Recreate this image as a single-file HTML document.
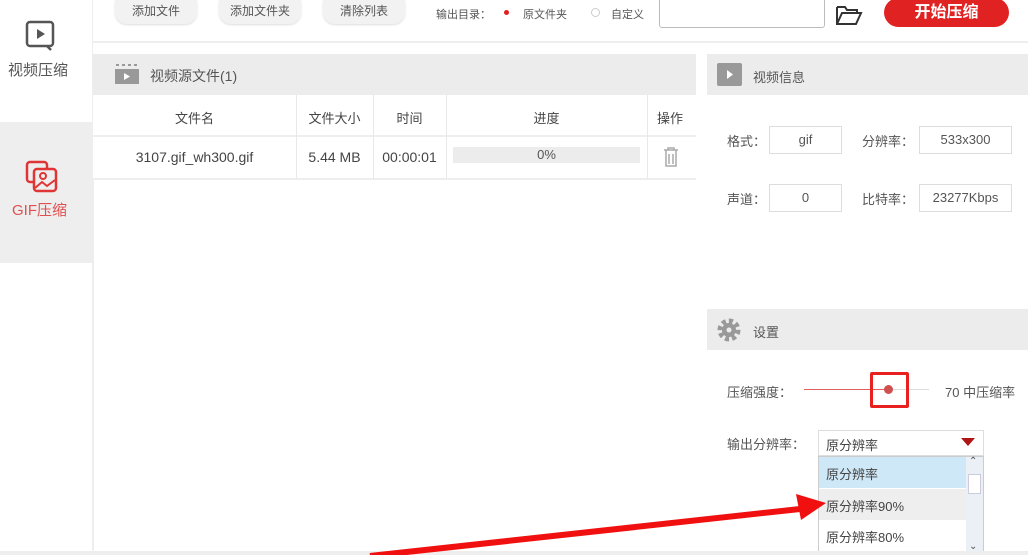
<!DOCTYPE html>
<html><head><meta charset="utf-8"><style>
*{margin:0;padding:0;box-sizing:border-box}
body{width:1028px;height:555px;overflow:hidden;background:#fff;font-family:"Liberation Sans","Noto Sans CJK SC",sans-serif;color:#444;position:relative;font-size:13px}
.a{position:absolute}
.btn{position:absolute;top:0;height:24px;border-radius:0 0 12px 12px;background:#f2f2f2;box-shadow:0 1px 2px #ddd;font-size:12px;color:#555;text-align:center;line-height:22px}
.hdr{position:absolute;background:#ececec;height:41px}
.cell{position:absolute;text-align:center;color:#444}
.vl{position:absolute;width:1px;background:#e8e8e8}
.hl{position:absolute;height:2px;background:#eee}
.inp{position:absolute;border:1px solid #ddd;height:28px;line-height:26px;text-align:center;font-size:13px;color:#555}
.lbl{position:absolute;font-size:13px;color:#555}
</style></head><body>
<div class="a" style="left:0;top:0;width:93px;height:555px;border-right:1px solid #eee"></div>
<svg class="a" style="left:25px;top:20px" width="32" height="32" viewBox="0 0 32 32"><rect x="2" y="2" width="26" height="24" rx="3" fill="none" stroke="#555" stroke-width="2.5"/><path d="M12 9 L20 14 L12 19Z" fill="#555"/><path d="M22 26 L26 30" stroke="#555" stroke-width="2.5"/></svg>
<div class="a" style="left:8px;top:59px;font-size:15px;color:#555">视频压缩</div>
<div class="a" style="left:0;top:122px;width:93px;height:141px;background:#eeeeee"></div>
<svg class="a" style="left:25px;top:160px" width="34" height="34" viewBox="0 0 34 34"><rect x="2" y="2" width="20" height="20" rx="3" fill="none" stroke="#e03535" stroke-width="2.5"/><rect x="9" y="9" width="22" height="22" rx="3" fill="#eee" stroke="#e03535" stroke-width="2.5"/><circle cx="18" cy="16" r="3" fill="none" stroke="#e03535" stroke-width="2"/><path d="M10 28 L17 22 L22 26 L30 20" fill="none" stroke="#e03535" stroke-width="2"/></svg>
<div class="a" style="left:12px;top:199px;font-size:15px;color:#e05050">GIF压缩</div>
<div class="btn" style="left:115px;width:82px">添加文件</div>
<div class="btn" style="left:219px;width:82px">添加文件夹</div>
<div class="btn" style="left:323px;width:82px">清除列表</div>
<div class="a" style="left:436px;top:6px;font-size:11px;color:#555">输出目录：</div>
<div class="a" style="left:504px;top:10px;width:5px;height:5px;border-radius:50%;background:#e02020"></div>
<div class="a" style="left:523px;top:6px;font-size:11px;color:#555">原文件夹</div>
<div class="a" style="left:591px;top:8px;width:9px;height:9px;border-radius:50%;border:1px solid #ccc"></div>
<div class="a" style="left:611px;top:6px;font-size:11px;color:#555">自定义</div>
<div class="a" style="left:659px;top:-2px;width:166px;height:30px;border:1px solid #bbb;border-radius:3px"></div>
<svg class="a" style="left:835px;top:4px" width="28" height="22" viewBox="0 0 28 22"><path d="M2 3 H10 L12 6 H22 V9" fill="none" stroke="#333" stroke-width="2"/><path d="M2 3 V20 H21 L26 9 H7 L2 20" fill="none" stroke="#333" stroke-width="2"/></svg>
<div class="a" style="left:884px;top:-2px;width:125px;height:29px;border-radius:15px;background:#e02222;color:#fff;font-size:16px;font-weight:bold;text-align:center;line-height:29px">开始压缩</div>
<div class="a" style="left:93px;top:41px;width:935px;height:2px;background:#eee"></div>
<div class="hdr" style="left:93px;top:54px;width:603px"></div>
<svg class="a" style="left:114px;top:63px" width="26" height="22" viewBox="0 0 26 22"><rect x="1" y="6" width="24" height="15" fill="#999"/><path d="M2 2 h3 M8 2 h3 M14 2 h3 M20 2 h3" stroke="#999" stroke-width="2"/><path d="M10 10 L16 13.5 L10 17Z" fill="#fff"/></svg>
<div class="a" style="left:150px;top:66px;font-size:14px;color:#555">视频源文件(1)</div>
<div class="hl" style="left:93px;top:135px;width:603px"></div>
<div class="hl" style="left:93px;top:178px;width:603px"></div>
<div class="vl" style="left:296px;top:95px;height:83px"></div>
<div class="vl" style="left:373px;top:95px;height:83px"></div>
<div class="vl" style="left:446px;top:95px;height:83px"></div>
<div class="vl" style="left:647px;top:95px;height:83px"></div>
<div class="cell" style="left:93px;top:108px;width:203px">文件名</div>
<div class="cell" style="left:296px;top:108px;width:77px">文件大小</div>
<div class="cell" style="left:373px;top:108px;width:73px">时间</div>
<div class="cell" style="left:446px;top:108px;width:201px">进度</div>
<div class="cell" style="left:647px;top:108px;width:49px;text-align:left;padding-left:10px">操作</div>
<div class="cell" style="left:93px;top:149px;width:203px;font-size:14px">3107.gif_wh300.gif</div>
<div class="cell" style="left:296px;top:149px;width:77px;font-size:14px">5.44 MB</div>
<div class="cell" style="left:373px;top:149px;width:73px;font-size:14px">00:00:01</div>
<div class="a" style="left:453px;top:147px;width:187px;height:16px;background:#ececec;text-align:center;font-size:13px;line-height:16px;color:#555">0%</div>
<svg class="a" style="left:662px;top:146px" width="18" height="22" viewBox="0 0 18 22"><path d="M2 4 H16 M6 4 V2 H12 V4 M4 4 V20 H14 V4 M7 8 V18 M11 8 V18" fill="none" stroke="#aaa" stroke-width="1.5"/></svg>
<div class="a" style="left:93px;top:178px;width:1px;height:372px;background:#eee"></div>
<div class="hdr" style="left:707px;top:54px;width:321px"></div>
<div class="a" style="left:717px;top:63px;width:25px;height:23px;background:#999;border-radius:2px"></div>
<svg class="a" style="left:717px;top:63px" width="25" height="23"><path d="M10 7 L16 11.5 L10 16Z" fill="#fff"/></svg>
<div class="a" style="left:753px;top:67px;font-size:13px;color:#555">视频信息</div>
<div class="lbl" style="left:727px;top:131px">格式：</div>
<div class="inp" style="left:769px;top:126px;width:73px">gif</div>
<div class="lbl" style="left:862px;top:131px">分辨率：</div>
<div class="inp" style="left:919px;top:126px;width:93px">533x300</div>
<div class="lbl" style="left:727px;top:189px">声道：</div>
<div class="inp" style="left:769px;top:184px;width:73px">0</div>
<div class="lbl" style="left:862px;top:189px">比特率：</div>
<div class="inp" style="left:919px;top:184px;width:93px">23277Kbps</div>
<div class="hdr" style="left:707px;top:309px;width:321px"></div>
<svg class="a" style="left:716px;top:317px" width="26" height="26" viewBox="0 0 26 26"><circle cx="13" cy="13" r="9" fill="none" stroke="#999" stroke-width="5" stroke-dasharray="4 3"/><circle cx="13" cy="13" r="7" fill="#999"/><circle cx="13" cy="13" r="2.5" fill="#ececec"/></svg>
<div class="a" style="left:753px;top:322px;font-size:13px;color:#555">设置</div>
<div class="lbl" style="left:727px;top:382px">压缩强度：</div>
<div class="a" style="left:804px;top:389px;width:85px;height:1px;background:#e06060"></div>
<div class="a" style="left:889px;top:389px;width:40px;height:1px;background:#ddd"></div>
<div class="a" style="left:884px;top:385px;width:9px;height:9px;border-radius:50%;background:#d05050"></div>
<div class="a" style="left:870px;top:372px;width:39px;height:36px;border:3px solid #e82020;border-radius:2px"></div>
<div class="lbl" style="left:945px;top:382px">70 中压缩率</div>
<div class="lbl" style="left:727px;top:434px">输出分辨率：</div>
<div class="a" style="left:818px;top:430px;width:166px;height:26px;border:1px solid #ddd"></div>
<div class="a" style="left:826px;top:435px;font-size:13px;color:#444">原分辨率</div>
<div class="a" style="left:961px;top:438px;width:0;height:0;border-left:7px solid transparent;border-right:7px solid transparent;border-top:8px solid #b01515"></div>
<div class="a" style="left:818px;top:456px;width:166px;height:99px;border:1px solid #ccc;background:#fff"></div>
<div class="a" style="left:819px;top:457px;width:147px;height:31px;background:#cfe8f8"></div>
<div class="a" style="left:819px;top:489px;width:147px;height:31px;background:#eeeeee"></div>
<div class="a" style="left:826px;top:464px;font-size:13px;color:#444">原分辨率</div>
<div class="a" style="left:826px;top:496px;font-size:13px;color:#444">原分辨率90%</div>
<div class="a" style="left:826px;top:527px;font-size:13px;color:#444">原分辨率80%</div>
<div class="a" style="left:966px;top:457px;width:17px;height:97px;background:#eaf0f5"></div>
<div class="a" style="left:968px;top:474px;width:13px;height:20px;background:#fff;border:1px solid #ccd"></div>
<div class="a" style="left:969px;top:456px;font-size:10px;color:#555">&#8963;</div>
<div class="a" style="left:969px;top:541px;font-size:10px;color:#555">&#8964;</div>
<div class="a" style="left:0;top:551px;width:1028px;height:4px;background:#eee"></div>
<svg class="a" style="left:0;top:0" width="1028" height="555"><path d="M370 556 L800 509" stroke="#f01010" stroke-width="6"/><path d="M826 503 L796 494 L801 520Z" fill="#f01010"/></svg>
</body></html>
